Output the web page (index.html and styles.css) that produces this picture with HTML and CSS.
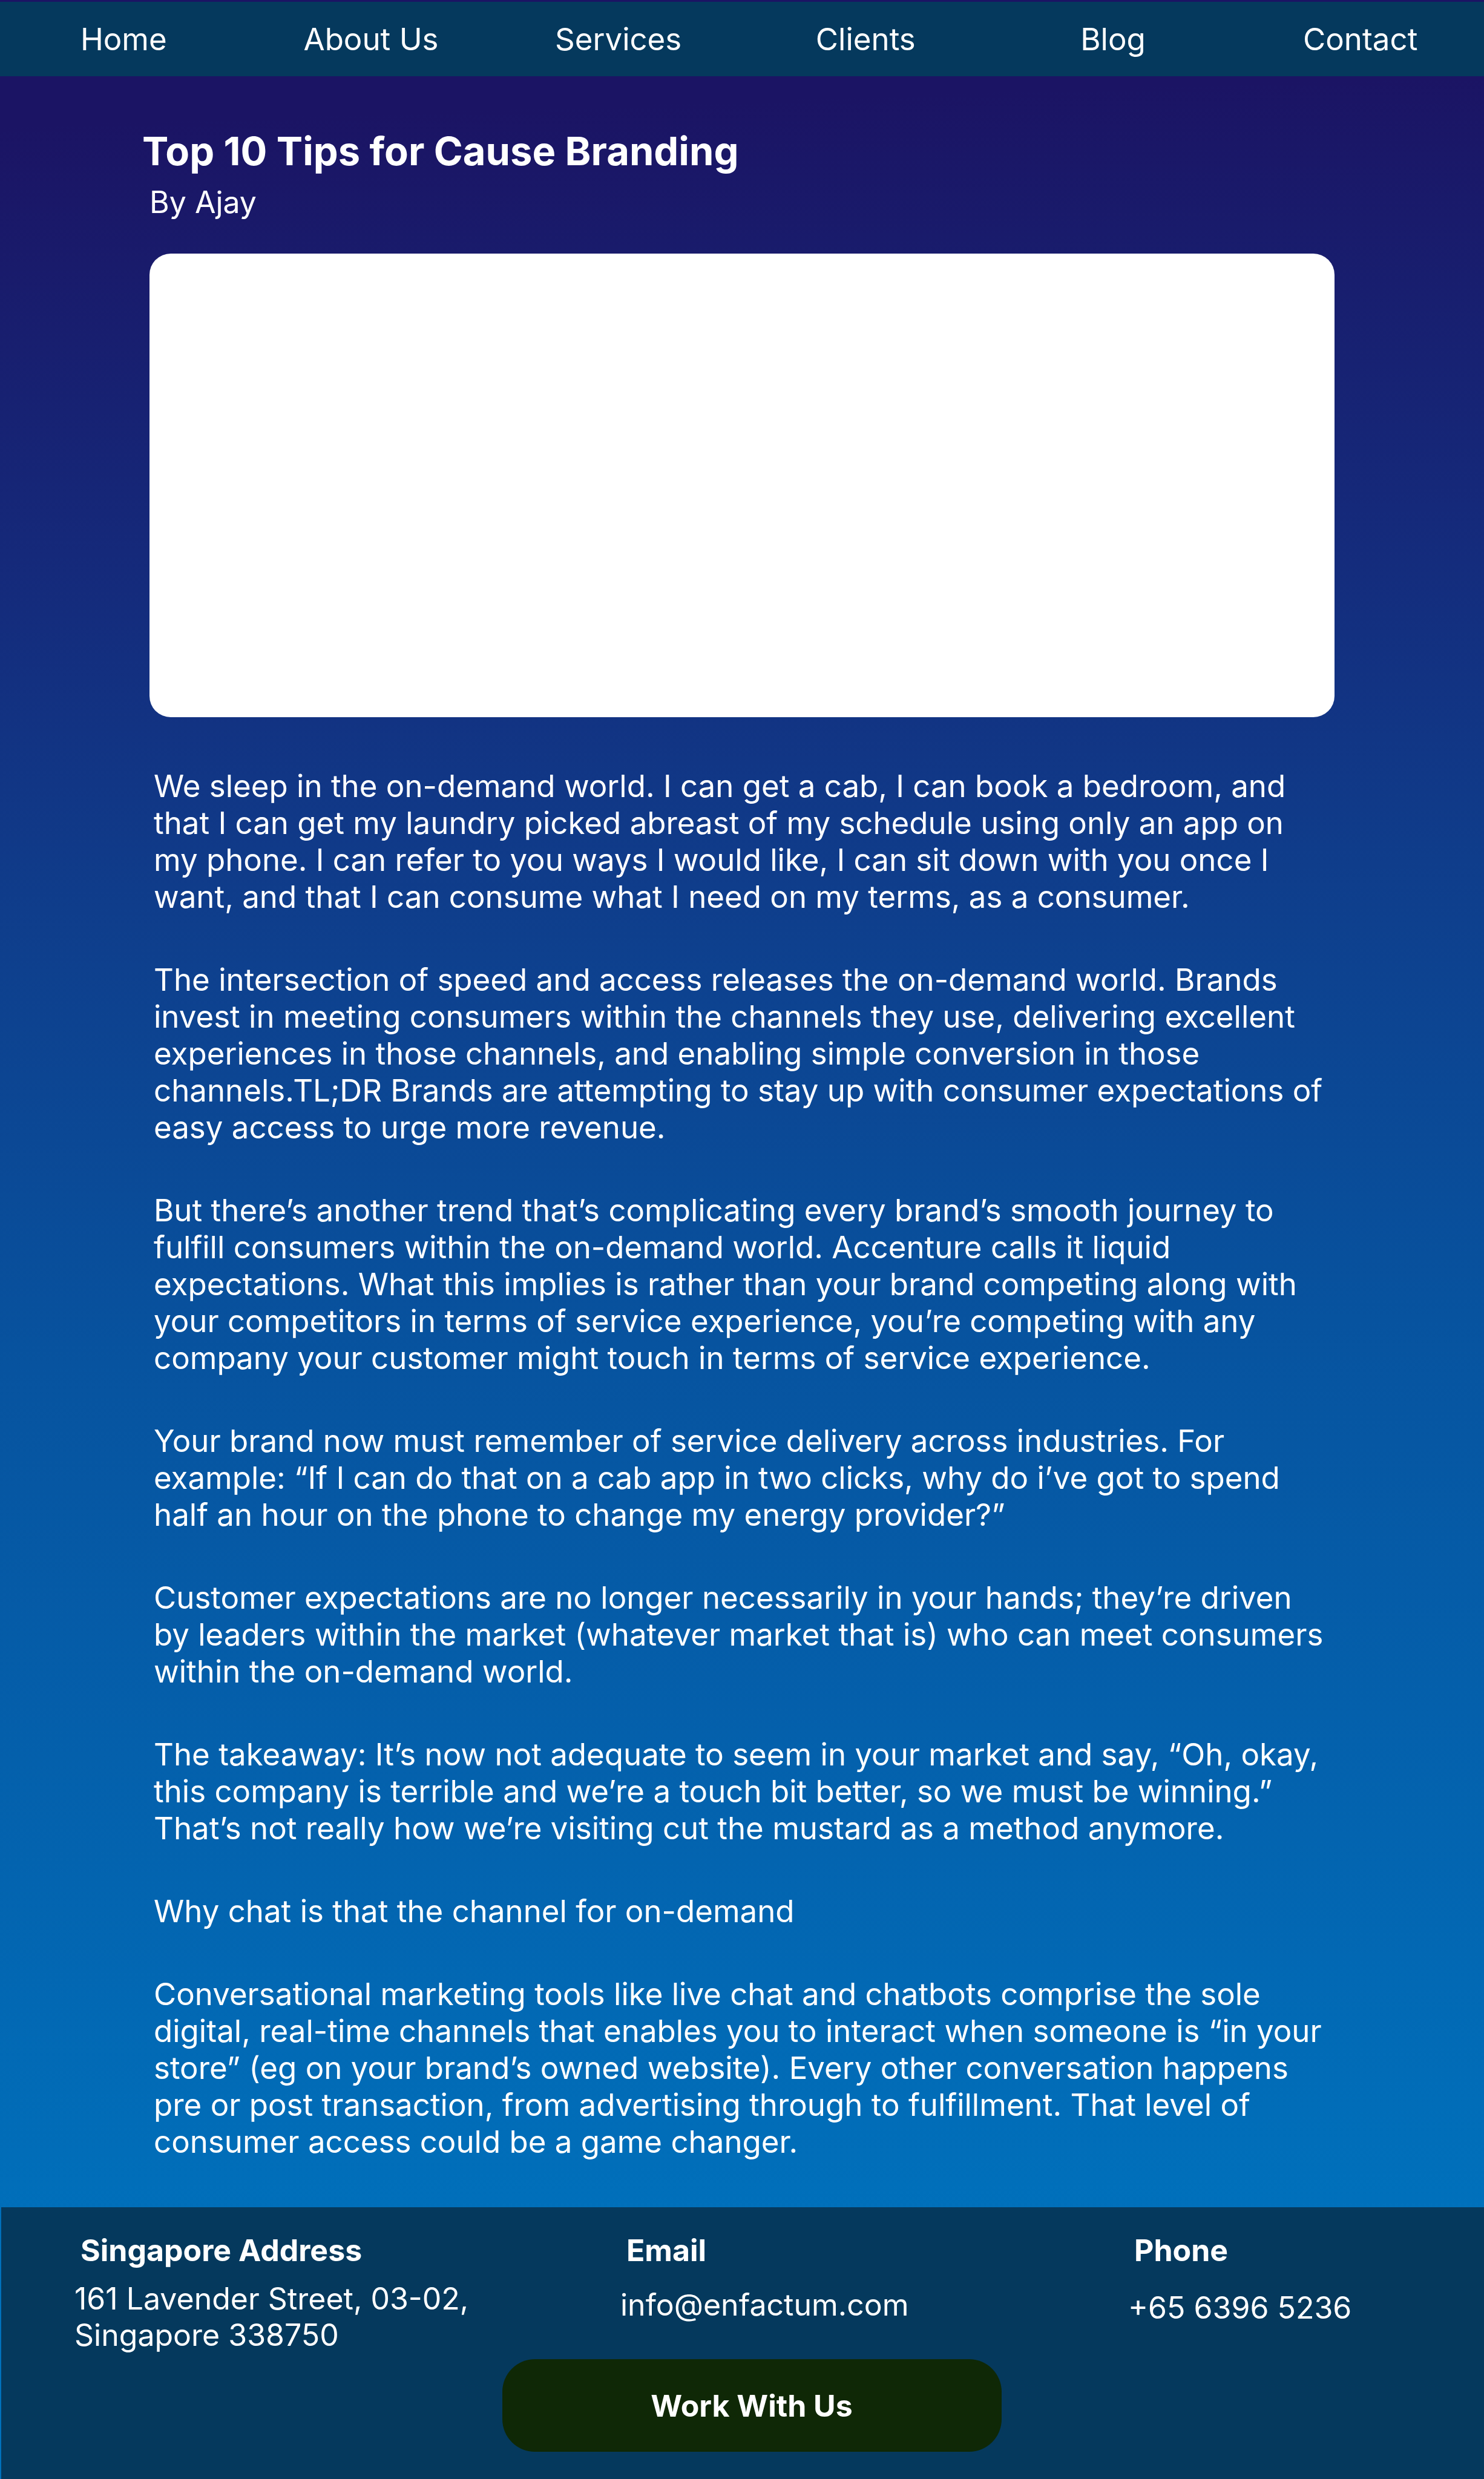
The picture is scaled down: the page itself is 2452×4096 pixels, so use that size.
FILE: index.html
```html
<!DOCTYPE html>
<html lang="en">
<head>
<meta charset="utf-8">
<meta name="viewport" content="width=device-width, initial-scale=1">
<title>Top 10 Tips for Cause Branding</title>
<link rel="stylesheet" href="styles.css">
</head>
<body>
<div class="page">
  <nav class="site-nav" aria-label="Main">
    <a href="#">Home</a>
    <a href="#">About Us</a>
    <a href="#">Services</a>
    <a href="#">Clients</a>
    <a href="#">Blog</a>
    <a href="#">Contact</a>
  </nav>
  <main class="article">
    <header class="article-head">
      <h1 class="title">Top 10 Tips for Cause Branding</h1>
      <p class="byline">By Ajay</p>
    </header>
    <div class="hero"></div>
    <div class="copy">
      <p>We sleep in the on-demand world. I can get a cab, I can book a bedroom, and that I can get my laundry picked abreast of my schedule using only an app on my phone. I can refer to you ways I would like, I can sit down with you once I want, and that I can consume what I need on my terms, as a consumer.</p>
      <p>The intersection of speed and access releases the on-demand world. Brands invest in meeting consumers within the channels they use, delivering excellent experiences in those channels, and enabling simple conversion in those channels.TL;DR Brands are attempting to stay up with consumer expectations of easy access to urge more revenue.</p>
      <p>But there’s another trend that’s complicating every brand’s smooth journey to fulfill consumers within the on-demand world. Accenture calls it liquid expectations. What this implies is rather than your brand competing along with your competitors in terms of service experience, you’re competing with any company your customer might touch in terms of service experience.</p>
      <p>Your brand now must remember of service delivery across industries. For example: “If I can do that on a cab app in two clicks, why do i’ve got to spend half an hour on the phone to change my energy provider?”</p>
      <p>Customer expectations are no longer necessarily in your hands; they’re driven by leaders within the market (whatever market that is) who can meet consumers within the on-demand world.</p>
      <p>The takeaway: It’s now not adequate to seem in your market and say, “Oh, okay, this company is terrible and we’re a touch bit better, so we must be winning.” That’s not really how we’re visiting cut the mustard as a method anymore.</p>
      <p>Why chat is that the channel for on-demand</p>
      <p>Conversational marketing tools like live chat and chatbots comprise the sole digital, real-time channels that enables you to interact when someone is “in your store” (eg on your brand’s owned website). Every other conversation happens pre or post transaction, from advertising through to fulfillment. That level of consumer access could be a game changer.</p>
    </div>
  </main>
  <footer class="site-footer">
    <div class="contacts">
      <section class="contact">
        <h2>Singapore Address</h2>
        <address>161 Lavender Street, 03-02,<br>Singapore 338750</address>
      </section>
      <section class="contact">
        <h2>Email</h2>
        <a class="email" href="mailto:info@enfactum.com">info@enfactum.com</a>
      </section>
      <section class="contact">
        <h2>Phone</h2>
        <a class="phone" href="tel:+6563965236">+65 6396 5236</a>
      </section>
    </div>
    <div class="action">
      <button class="cta" type="button">Work With Us</button>
    </div>
  </footer>
</div>
</body>
</html>
```
FILE: styles.css
```css
* {
  box-sizing: border-box;
  margin: 0;
  padding: 0;
}

body {
  color: #fff;
  font-family: Inter, sans-serif;
  font-size: 51px;
  line-height: 61px;
}

a {
  color: inherit;
  text-decoration: none;
}

.page {
  display: flex;
  flex-direction: column;
  min-height: 100vh;
  padding-top: 3px;
  background: linear-gradient(178deg, #1b1464 0%, #1b1464 5%, #15297a 22%, #0f3d8b 36%, #07539f 54%, #0071bc 90%);
}

.site-nav {
  display: grid;
  grid-template-columns: repeat(6, 1fr);
  padding: 31px 0;
  background: #05395d;
  text-align: center;
}

.article {
  flex: 1;
  padding: 80px 247px 76px;
}

.title {
  margin-left: -12px;
  font-size: 65px;
  font-weight: 700;
  line-height: 88px;
}

.byline {
  margin-top: 10px;
  font-size: 50px;
}

.hero {
  height: 766px;
  margin-top: 54px;
  border-radius: 35px;
  background: #fff;
}

.copy {
  display: flex;
  flex-direction: column;
  gap: 76px;
  margin-top: 83px;
  padding-left: 7px;
}

.site-footer {
  margin-left: 2px;
  padding: 41px 121px 45px;
  background: #05395d;
  font-size: 50px;
  line-height: 60px;
}

.contacts {
  display: grid;
  grid-template-columns: 902px 839px 1fr;
}

.contact h2 {
  padding-left: 10px;
  font-size: 50px;
  font-weight: 700;
}

.contact address {
  margin-top: 20px;
  font-style: normal;
}

.email,
.phone {
  display: block;
  width: fit-content;
  margin-top: 30px;
}

.phone {
  margin-top: 35px;
}

.action {
  display: flex;
  justify-content: center;
  margin-top: 10px;
  padding-left: 30px;
}

.cta {
  width: 825px;
  height: 153px;
  border: 0;
  border-radius: 54px;
  background: #0f2806;
  color: #fff;
  font: 700 50px/60px Inter, sans-serif;
}
```
